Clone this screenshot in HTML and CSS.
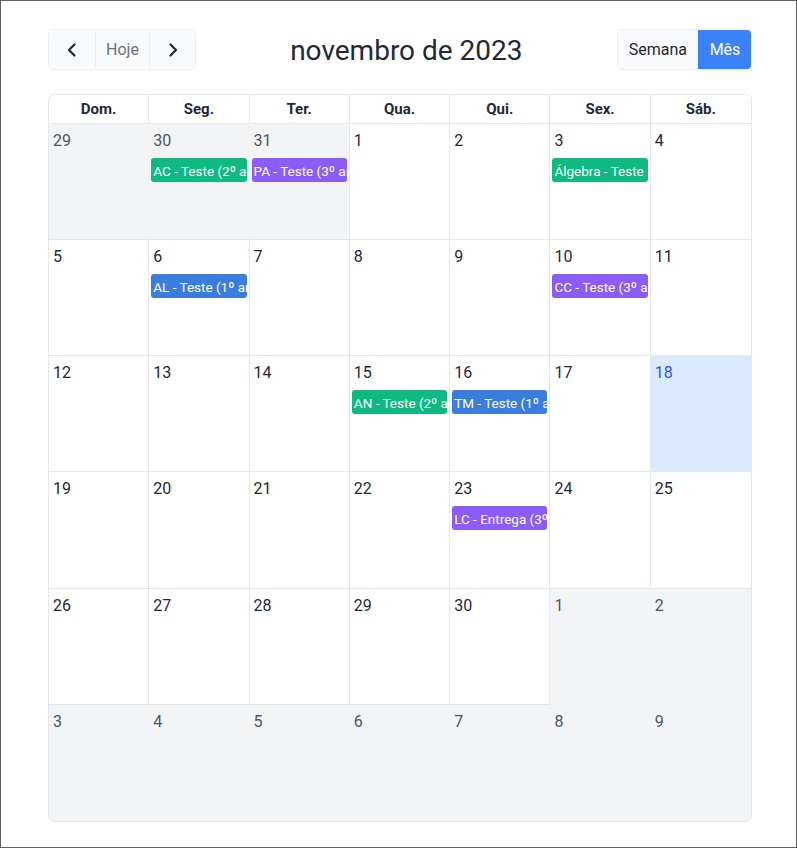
FILE: index.html
```html
<!DOCTYPE html>
<html lang="pt">
<head>
<meta charset="utf-8">
<link rel="stylesheet" href="styles.css">
</head>
<body>
<div class="frame">
  <div class="toolbar">
    <div class="btn-group">
      <button class="btn icon-btn" aria-label="Anterior">
        <svg width="16" height="16" viewBox="0 0 16 16"><path d="M10.5 2.5 L5 8 L10.5 13.5" fill="none" stroke="#1f2937" stroke-width="2.2" stroke-linecap="round" stroke-linejoin="round"/></svg>
      </button>
      <button class="btn muted">Hoje</button>
      <button class="btn icon-btn" aria-label="Próximo">
        <svg width="16" height="16" viewBox="0 0 16 16"><path d="M5.5 2.5 L11 8 L5.5 13.5" fill="none" stroke="#1f2937" stroke-width="2.2" stroke-linecap="round" stroke-linejoin="round"/></svg>
      </button>
    </div>
    <h1 class="title">novembro de 2023</h1>
    <div class="btn-group">
      <button class="btn">Semana</button>
      <button class="btn active">Mês</button>
    </div>
  </div>

  <div class="calendar">
    <div class="head">Dom.</div>
    <div class="head">Seg.</div>
    <div class="head">Ter.</div>
    <div class="head">Qua.</div>
    <div class="head">Qui.</div>
    <div class="head">Sex.</div>
    <div class="head last">Sáb.</div>

    <div class="cell other bb"><div class="num">29</div></div>
    <div class="cell other bb"><div class="num">30</div><div class="event green">AC - Teste (2º ano)</div></div>
    <div class="cell other bb br"><div class="num">31</div><div class="event purple">PA - Teste (3º ano)</div></div>
    <div class="cell"><div class="num">1</div></div>
    <div class="cell"><div class="num">2</div></div>
    <div class="cell"><div class="num">3</div><div class="event green">Álgebra - Teste</div></div>
    <div class="cell last"><div class="num">4</div></div>

    <div class="cell"><div class="num">5</div></div>
    <div class="cell"><div class="num">6</div><div class="event blue">AL - Teste (1º ano)</div></div>
    <div class="cell"><div class="num">7</div></div>
    <div class="cell"><div class="num">8</div></div>
    <div class="cell"><div class="num">9</div></div>
    <div class="cell"><div class="num">10</div><div class="event purple">CC - Teste (3º ano)</div></div>
    <div class="cell last"><div class="num">11</div></div>

    <div class="cell"><div class="num">12</div></div>
    <div class="cell"><div class="num">13</div></div>
    <div class="cell"><div class="num">14</div></div>
    <div class="cell"><div class="num">15</div><div class="event green">AN - Teste (2º ano)</div></div>
    <div class="cell"><div class="num">16</div><div class="event blue">TM - Teste (1º ano)</div></div>
    <div class="cell"><div class="num">17</div></div>
    <div class="cell last today"><div class="num">18</div></div>

    <div class="cell"><div class="num">19</div></div>
    <div class="cell"><div class="num">20</div></div>
    <div class="cell"><div class="num">21</div></div>
    <div class="cell"><div class="num">22</div></div>
    <div class="cell"><div class="num">23</div><div class="event purple">LC - Entrega (3º ano)</div></div>
    <div class="cell"><div class="num">24</div></div>
    <div class="cell last"><div class="num">25</div></div>

    <div class="cell"><div class="num">26</div></div>
    <div class="cell"><div class="num">27</div></div>
    <div class="cell"><div class="num">28</div></div>
    <div class="cell"><div class="num">29</div></div>
    <div class="cell"><div class="num">30</div></div>
    <div class="cell other"><div class="num">1</div></div>
    <div class="cell other"><div class="num">2</div></div>

    <div class="cell other"><div class="num">3</div></div>
    <div class="cell other"><div class="num">4</div></div>
    <div class="cell other"><div class="num">5</div></div>
    <div class="cell other"><div class="num">6</div></div>
    <div class="cell other"><div class="num">7</div></div>
    <div class="cell other"><div class="num">8</div></div>
    <div class="cell other"><div class="num">9</div></div>
  </div>
</div>
</body>
</html>
```

FILE: styles.css
```css
* { box-sizing: border-box; }

html, body {
  margin: 0;
  padding: 0;
  background: #ffffff;
}

body {
  font-family: Roboto, "Liberation Sans", sans-serif;
  color: #1f2937;
}

.frame {
  width: 797px;
  height: 848px;
  border: 1px solid #5f5f5f;
  padding: 28px 44px 0 47px;
}

.toolbar {
  display: flex;
  align-items: center;
  justify-content: space-between;
  height: 41px;
  margin-bottom: 24px;
}

.title {
  margin: 0;
  padding-top: 2px;
  font-size: 28px;
  font-weight: 400;
  color: #1f2937;
}

.btn-group {
  display: flex;
  height: 41px;
  border: 1px solid #eef0f2;
  border-radius: 5px;
  overflow: hidden;
  background: #f9fafb;
}

.btn {
  font-family: Roboto, "Liberation Sans", sans-serif;
  font-size: 16px;
  color: #1f2937;
  background: #f9fafb;
  border: 0;
  border-left: 1px solid #eef0f2;
  padding: 0 11px;
  margin: 0;
  height: 100%;
  display: flex;
  align-items: center;
  justify-content: center;
}

.btn:first-child { border-left: 0; }

.icon-btn { width: 46px; padding: 0; }

.muted { color: #6b7280; width: 54px; padding: 0; }

.btn.active {
  background: #3b82f6;
  color: #ffffff;
  border-left-color: #3b82f6;
  width: 53px;
  padding: 0;
}

.calendar {
  display: grid;
  grid-template-columns: repeat(7, 1fr);
  grid-template-rows: 29px repeat(6, 1fr);
  height: 728px;
  border: 1px solid #e5e7eb;
  border-radius: 6px;
  overflow: hidden;
}

.head {
  display: flex;
  align-items: center;
  justify-content: center;
  font-size: 15px;
  font-weight: 700;
  color: #1f2937;
  border-right: 1px solid #e5e7eb;
  border-bottom: 1px solid #e5e7eb;
}

.head.last { border-right: 0; }

.cell {
  min-width: 0;
  overflow: hidden;
  border-right: 1px solid #e5e7eb;
  border-bottom: 1px solid #e5e7eb;
  background: #ffffff;
}

.cell.last { border-right: 0; }

.cell.other {
  background: #f3f4f6;
  border-color: transparent;
}

.cell.other .num { color: #4b5563; }

.cell.other.bb { border-bottom-color: #e5e7eb; }
.cell.other.br { border-right-color: #e5e7eb; }

.cell.today { background: #dbe8fd; }
.cell.today .num { color: #2a5bd7; }

.num {
  font-size: 16px;
  line-height: 22px;
  padding: 6px 4px 0 4px;
  color: #1f2937;
}

.event {
  margin: 6px 2px 0 2px;
  height: 24px;
  line-height: 26px;
  padding: 0 2px;
  border-radius: 3px;
  font-size: 13.5px;
  color: #ffffff;
  white-space: nowrap;
  overflow: hidden;
}

.green { background: #10b981; }
.purple { background: #8b5cf6; }
.blue { background: #3b7ddd; }
```
